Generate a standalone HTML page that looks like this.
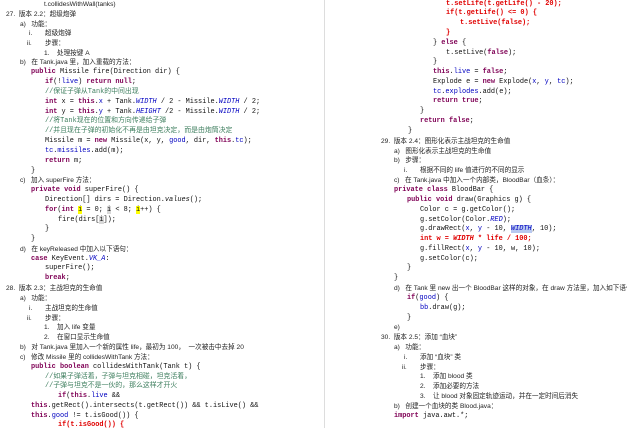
<!DOCTYPE html>
<html><head><meta charset="utf-8"><style>
html,body{margin:0;padding:0;background:#fff;}
body{width:627px;height:428px;position:relative;overflow:hidden;font-family:"Liberation Sans","Noto Sans CJK SC",sans-serif;color:#222;}
.l{position:absolute;white-space:pre;font-size:6.6px;line-height:9px;height:9px;}
.m{font-family:"Liberation Mono",monospace;font-size:6.9px;color:#111;}
.k{color:#7f0055;font-weight:bold;}
.f{color:#0000c0;}
.c{color:#3f7f5f;}
.r{color:#e00000;}
.i{font-style:italic;}
.y{background:#ffff00;}
.g{background:#d8d8d8;}
.h{background:#b8c8f0;}
.sep{position:absolute;left:324px;top:0;width:1px;height:428px;background:#ddd;}
</style></head><body>
<div class="sep"></div>
<!-- left column -->
<div class="l" style="top:0;left:44px">t.collidesWithWall(tanks)</div>
<div class="l" style="top:10px;left:6px">27.&nbsp;&nbsp;版本 2.2：超级炮弹</div>
<div class="l" style="top:20px;left:20px">a)&nbsp;&nbsp;&nbsp;功能：</div>
<div class="l" style="top:29px;left:29px">i.</div><div class="l" style="top:29px;left:45px">超级炮弹</div>
<div class="l" style="top:39px;left:27px">ii.</div><div class="l" style="top:39px;left:45px">步骤：</div>
<div class="l" style="top:49px;left:44px">1.</div><div class="l" style="top:49px;left:57px">处理按键 A</div>
<div class="l" style="top:58px;left:20px">b)&nbsp;&nbsp;&nbsp;在 Tank.java 里，加入重载的方法：</div>
<div class="l m" style="top:68px;left:31px"><span class="k">public</span> Missile fire(Direction dir) {</div>
<div class="l m" style="top:78px;left:45px"><span class="k">if</span>(!<span class="f">live</span>) <span class="k">return null</span>;</div>
<div class="l m c" style="top:88px;left:45px">//保证子弹从Tank的中间出现</div>
<div class="l m" style="top:98px;left:45px"><span class="k">int</span> x = <span class="k">this</span>.<span class="f">x</span> + Tank.<span class="f i">WIDTH</span> / 2 - Missile.<span class="f i">WIDTH</span> / 2;</div>
<div class="l m" style="top:108px;left:45px"><span class="k">int</span> y = <span class="k">this</span>.<span class="f">y</span> + Tank.<span class="f i">HEIGHT</span> /2 - Missile.<span class="f i">WIDTH</span> / 2;</div>
<div class="l m c" style="top:117px;left:45px">//将Tank现在的位置和方向传递给子弹</div>
<div class="l m c" style="top:127px;left:45px">//并且现在子弹的初始化不再是由坦克决定，而是由炮筒决定</div>
<div class="l m" style="top:137px;left:45px">Missile m = <span class="k">new</span> Missile(x, y, <span class="f">good</span>, dir, <span class="k">this</span>.<span class="f">tc</span>);</div>
<div class="l m" style="top:147px;left:45px"><span class="f">tc</span>.<span class="f">missiles</span>.add(m);</div>
<div class="l m" style="top:157px;left:45px"><span class="k">return</span> m;</div>
<div class="l m" style="top:167px;left:31px">}</div>
<div class="l" style="top:176px;left:20px">c)&nbsp;&nbsp;&nbsp;加入 superFire 方法：</div>
<div class="l m" style="top:186px;left:31px"><span class="k">private void</span> superFire() {</div>
<div class="l m" style="top:196px;left:45px">Direction[] dirs = Direction.<span class="i">values</span>();</div>
<div class="l m" style="top:206px;left:45px"><span class="k">for</span>(<span class="k">int</span> <span class="y">i</span> = 0; <span class="g">i</span> &lt; 8; <span class="y">i</span>++) {</div>
<div class="l m" style="top:216px;left:58px">fire(dirs[<span class="g">i</span>]);</div>
<div class="l m" style="top:225px;left:45px">}</div>
<div class="l m" style="top:235px;left:31px">}</div>
<div class="l" style="top:245px;left:20px">d)&nbsp;&nbsp;&nbsp;在 keyReleased 中加入以下语句：</div>
<div class="l m" style="top:255px;left:31px"><span class="k">case</span> KeyEvent.<span class="f i">VK_A</span>:</div>
<div class="l m" style="top:264px;left:45px">superFire();</div>
<div class="l m" style="top:274px;left:45px"><span class="k">break</span>;</div>
<div class="l" style="top:284px;left:6px">28.&nbsp;&nbsp;版本 2.3：主战坦克的生命值</div>
<div class="l" style="top:294px;left:20px">a)&nbsp;&nbsp;&nbsp;功能：</div>
<div class="l" style="top:304px;left:29px">i.</div><div class="l" style="top:304px;left:45px">主战坦克的生命值</div>
<div class="l" style="top:314px;left:27px">ii.</div><div class="l" style="top:314px;left:45px">步骤：</div>
<div class="l" style="top:323px;left:44px">1.</div><div class="l" style="top:323px;left:57px">加入 life 变量</div>
<div class="l" style="top:333px;left:44px">2.</div><div class="l" style="top:333px;left:57px">在窗口显示生命值</div>
<div class="l" style="top:343px;left:20px">b)&nbsp;&nbsp;&nbsp;对 Tank.java 里加入一个新的属性 life，最初为 100，&nbsp;&nbsp;一次被击中去掉 20</div>
<div class="l" style="top:353px;left:20px">c)&nbsp;&nbsp;&nbsp;修改 Missile 里的 collidesWithTank 方法：</div>
<div class="l m" style="top:363px;left:31px"><span class="k">public boolean</span> collidesWithTank(Tank t) {</div>
<div class="l m c" style="top:373px;left:45px">//如果子弹活着，子弹与坦克相碰，坦克活着，</div>
<div class="l m c" style="top:382px;left:45px">//子弹与坦克不是一伙的，那么这样才开火</div>
<div class="l m" style="top:392px;left:58px"><span class="k">if</span>(<span class="k">this</span>.<span class="f">live</span> &amp;&amp;</div>
<div class="l m" style="top:402px;left:31px"><span class="k">this</span>.getRect().intersects(t.getRect()) &amp;&amp; t.isLive() &amp;&amp;</div>
<div class="l m" style="top:412px;left:31px"><span class="k">this</span>.<span class="f">good</span> != t.isGood()) {</div>
<div class="l m r" style="top:421px;left:58px"><b>if(t.isGood()) {</b></div>
<!-- right column -->
<div class="l m r" style="top:0;left:446px"><b>t.setLife(t.getLife() - 20);</b></div>
<div class="l m r" style="top:9px;left:446px"><b>if(t.getLife() &lt;= 0) {</b></div>
<div class="l m r" style="top:19px;left:460px"><b>t.setLive(false);</b></div>
<div class="l m r" style="top:29px;left:446px"><b>}</b></div>
<div class="l m" style="top:39px;left:433px">} <span class="k">else</span> {</div>
<div class="l m" style="top:49px;left:446px">t.setLive(<span class="k">false</span>);</div>
<div class="l m" style="top:58px;left:433px">}</div>
<div class="l m" style="top:68px;left:433px"><span class="k">this</span>.<span class="f">live</span> = <span class="k">false</span>;</div>
<div class="l m" style="top:78px;left:433px">Explode e = <span class="k">new</span> Explode(<span class="f">x</span>, <span class="f">y</span>, <span class="f">tc</span>);</div>
<div class="l m" style="top:88px;left:433px"><span class="f">tc</span>.<span class="f">explodes</span>.add(e);</div>
<div class="l m" style="top:97px;left:433px"><span class="k">return true</span>;</div>
<div class="l m" style="top:107px;left:420px">}</div>
<div class="l m" style="top:117px;left:420px"><span class="k">return false</span>;</div>
<div class="l m" style="top:127px;left:408px">}</div>
<div class="l" style="top:137px;left:381px">29.&nbsp;&nbsp;版本 2.4：图形化表示主战坦克的生命值</div>
<div class="l" style="top:147px;left:394px">a)&nbsp;&nbsp;&nbsp;图形化表示主战坦克的生命值</div>
<div class="l" style="top:156px;left:394px">b)&nbsp;&nbsp;&nbsp;步骤：</div>
<div class="l" style="top:166px;left:404px">i.</div><div class="l" style="top:166px;left:420px">根据不同的 life 值进行的不同的显示</div>
<div class="l" style="top:176px;left:394px">c)&nbsp;&nbsp;&nbsp;在 Tank.java 中加入一个内部类，BloodBar（血条）：</div>
<div class="l m" style="top:186px;left:394px"><span class="k">private class</span> BloodBar {</div>
<div class="l m" style="top:196px;left:407px"><span class="k">public void</span> draw(Graphics g) {</div>
<div class="l m" style="top:206px;left:420px">Color c = g.getColor();</div>
<div class="l m" style="top:216px;left:420px">g.setColor(Color.<span class="f i">RED</span>);</div>
<div class="l m" style="top:225px;left:420px">g.drawRect(<span class="f">x</span>, <span class="f">y</span> - 10, <span class="f i h">WIDTH</span>, 10);</div>
<div class="l m r" style="top:235px;left:420px"><b>int w = <i>WIDTH</i> * life / 100;</b></div>
<div class="l m" style="top:245px;left:420px">g.fillRect(<span class="f">x</span>, <span class="f">y</span> - 10, w, 10);</div>
<div class="l m" style="top:255px;left:420px">g.setColor(c);</div>
<div class="l m" style="top:264px;left:407px">}</div>
<div class="l m" style="top:274px;left:394px">}</div>
<div class="l" style="top:284px;left:394px">d)&nbsp;&nbsp;&nbsp;在 Tank 里 new 出一个 BloodBar 这样的对象，在 draw 方法里，加入如下语句</div>
<div class="l m" style="top:294px;left:407px"><span class="k">if</span>(<span class="f">good</span>) {</div>
<div class="l m" style="top:304px;left:420px"><span class="f">bb</span>.draw(g);</div>
<div class="l m" style="top:314px;left:407px">}</div>
<div class="l" style="top:323px;left:394px">e)</div>
<div class="l" style="top:333px;left:381px">30.&nbsp;&nbsp;版本 2.5：添加 “血块”</div>
<div class="l" style="top:343px;left:394px">a)&nbsp;&nbsp;&nbsp;功能：</div>
<div class="l" style="top:353px;left:404px">i.</div><div class="l" style="top:353px;left:420px">添加 “血块” 类</div>
<div class="l" style="top:363px;left:402px">ii.</div><div class="l" style="top:363px;left:420px">步骤：</div>
<div class="l" style="top:372px;left:420px">1.</div><div class="l" style="top:372px;left:433px">添加 blood 类</div>
<div class="l" style="top:382px;left:420px">2.</div><div class="l" style="top:382px;left:433px">添加必要的方法</div>
<div class="l" style="top:392px;left:420px">3.</div><div class="l" style="top:392px;left:433px">让 blood 对象固定轨迹运动，并在一定时间后消失</div>
<div class="l" style="top:402px;left:394px">b)&nbsp;&nbsp;&nbsp;创建一个血块的类 Blood.java：</div>
<div class="l m" style="top:412px;left:394px"><span class="k">import</span> java.awt.*;</div>
</body></html>
